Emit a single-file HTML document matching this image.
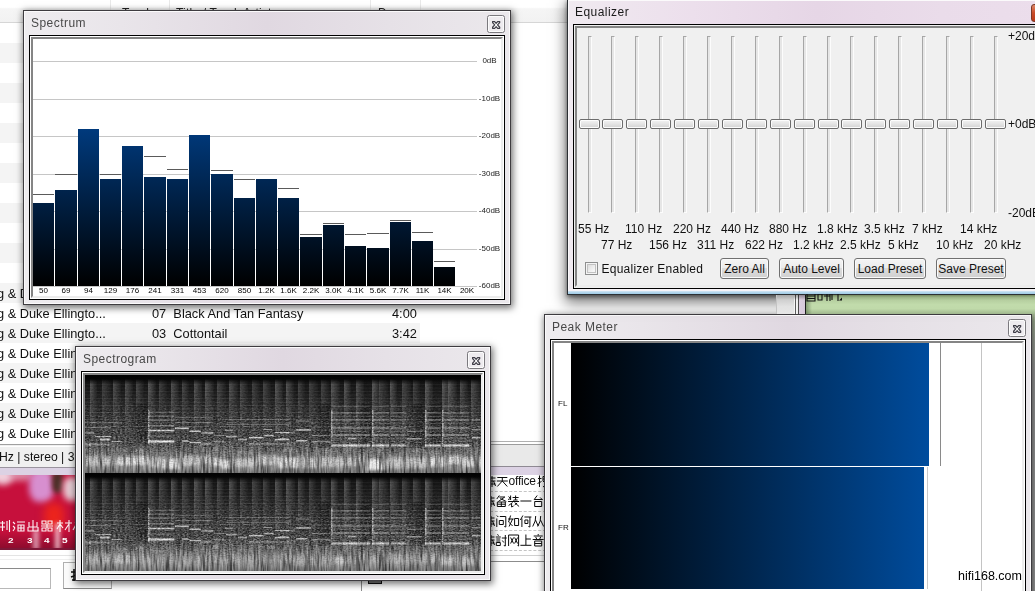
<!DOCTYPE html><html><head><meta charset="utf-8"><title>foobar2000</title><style>
*{box-sizing:border-box}
html,body{margin:0;padding:0}
body{width:1035px;height:591px;overflow:hidden;position:relative;background:#fff;
 font-family:"Liberation Sans",sans-serif;font-size:12px;color:#111}
.a{position:absolute}
.t{position:absolute;white-space:nowrap;line-height:1;filter:grayscale(1)}
.win{position:absolute;border:1px solid #3e3c40;box-shadow:1px 2px 7px 1px rgba(0,0,0,.55);
 background:#ece8ed}
.win:before{content:"";position:absolute;left:0;top:0;right:0;bottom:0;border:1px solid #fbfafb}
.ttl{position:absolute;white-space:nowrap;line-height:1;filter:grayscale(1);font-size:12px;letter-spacing:.45px;color:#4b4754}
.cls{position:absolute;width:18px;height:18px;border:1px solid #7b797e;border-radius:2.5px;
 background:#eeebef;box-shadow:inset 0 0 0 1px #fbfbfb}
.frm{position:absolute;border:1px solid #000;background:#fff}
.frm:before{content:"";position:absolute;left:1px;top:1px;right:1px;bottom:1px;border:2px solid #858585;border-right-color:#ececec;border-bottom-color:#ececec}
.btn{position:absolute;height:21px;border:1px solid #707070;border-radius:3px;
 background:linear-gradient(#f4f4f4 0,#ececec 45%,#dcdcdc 50%,#d0d0d0 100%);box-shadow:inset 0 0 0 1px #fafafa;
 font-size:12px;text-align:center;line-height:20px;color:#111;white-space:nowrap}
</style></head><body>
<div class="a" style="left:0;top:0;width:567px;height:23px;background:linear-gradient(#fff 0,#fff 33%,#f5f5f5 40%,#f2f2f2 100%);border-bottom:1px solid #d6d6d6"></div>
<div class="a" style="left:110px;top:0;width:1px;height:22px;background:#e9e9e9"></div>
<div class="a" style="left:169px;top:0;width:1px;height:22px;background:#e9e9e9"></div>
<div class="a" style="left:370px;top:0;width:1px;height:22px;background:#e9e9e9"></div>
<div class="a" style="left:420px;top:0;width:1px;height:22px;background:#e9e9e9"></div>
<div class="t" style="left:122px;top:7px;font-size:12px;letter-spacing:.2px;color:#222">Track</div>
<div class="t" style="left:176px;top:7px;font-size:12px;letter-spacing:.2px;color:#222">Title / Track Artist</div>
<div class="t" style="left:378px;top:7px;font-size:12px;letter-spacing:.2px;color:#222">Dura...</div>
<div class="a" style="left:0;top:43px;width:420px;height:20px;background:#f4f4f4"></div>
<div class="a" style="left:0;top:83px;width:420px;height:20px;background:#f4f4f4"></div>
<div class="a" style="left:0;top:123px;width:420px;height:20px;background:#f4f4f4"></div>
<div class="a" style="left:0;top:163px;width:420px;height:20px;background:#f4f4f4"></div>
<div class="a" style="left:0;top:203px;width:420px;height:20px;background:#f4f4f4"></div>
<div class="a" style="left:0;top:243px;width:420px;height:20px;background:#f4f4f4"></div>
<div class="a" style="left:0;top:283px;width:420px;height:20px;background:#f4f4f4"></div>
<div class="a" style="left:0;top:323px;width:420px;height:20px;background:#f4f4f4"></div>
<div class="a" style="left:0;top:363px;width:420px;height:20px;background:#f4f4f4"></div>
<div class="a" style="left:0;top:403px;width:420px;height:20px;background:#f4f4f4"></div>
<div class="t" style="left:-3px;top:288px;font-size:12.8px;color:#111">g &amp; Duke Ellingto...</div>
<div class="t" style="left:-3px;top:308px;font-size:12.8px;color:#111">g &amp; Duke Ellingto...</div>
<div class="t" style="left:-3px;top:328px;font-size:12.8px;color:#111">g &amp; Duke Ellingto...</div>
<div class="t" style="left:-3px;top:348px;font-size:12.8px;color:#111">g &amp; Duke Ellingto...</div>
<div class="t" style="left:-3px;top:368px;font-size:12.8px;color:#111">g &amp; Duke Ellingto...</div>
<div class="t" style="left:-3px;top:388px;font-size:12.8px;color:#111">g &amp; Duke Ellingto...</div>
<div class="t" style="left:-3px;top:408px;font-size:12.8px;color:#111">g &amp; Duke Ellingto...</div>
<div class="t" style="left:-3px;top:428px;font-size:12.8px;color:#111">g &amp; Duke Ellingto...</div>
<div class="t" style="left:152px;top:308px;font-size:12.8px">07&nbsp; Black And Tan Fantasy</div>
<div class="t" style="left:152px;top:328px;font-size:12.8px">03&nbsp; Cottontail</div>
<div class="t" style="left:392px;top:308px;font-size:12.8px">4:00</div>
<div class="t" style="left:392px;top:328px;font-size:12.8px">3:42</div>
<div class="a" style="left:0;top:444px;width:545px;height:1px;background:#a0a0a0"></div>
<div class="a" style="left:0;top:445px;width:545px;height:22px;background:#f0f0f0"></div>
<div class="a" style="left:0;top:446px;width:545px;height:1px;background:#fff"></div>
<div class="t" style="left:-1px;top:451px;font-size:12.2px">Hz | stereo | 3</div>
<div class="a" style="left:0;top:467px;width:545px;height:1px;background:#9a949e"></div>
<div class="a" style="left:0;top:468px;width:545px;height:7px;background:#dcd2e4"></div>
<div class="a" style="left:0;top:475px;width:80px;height:75px;overflow:hidden;background:#c6103c"><div class="a" style="left:-8px;top:-8px;width:22px;height:18px;background:#f0d0dc;border-radius:50%;filter:blur(3px)"></div><div class="a" style="left:8px;top:-6px;width:26px;height:12px;background:#e4a8c0;border-radius:50%;filter:blur(3px);opacity:.8"></div><div class="a" style="left:29px;top:-6px;width:25px;height:33px;background:#d78fcf;border-radius:40%;filter:blur(3px)"></div><div class="a" style="left:52px;top:-4px;width:11px;height:22px;background:#4a3028;border-radius:40%;filter:blur(2.5px)"></div><div class="a" style="left:63px;top:2px;width:18px;height:24px;background:#e6ccd4;border-radius:40%;filter:blur(3px)"></div><div class="a" style="left:44px;top:28px;width:20px;height:26px;background:#ec241c;border-radius:40%;filter:blur(4px)"></div><div class="a" style="left:0;top:56px;width:80px;height:19px;background:linear-gradient(rgba(120,10,40,0),rgba(120,10,40,.8))"></div><div class="a" style="left:33px;top:55px;width:6px;height:20px;background:#e8b0c4;filter:blur(2px);opacity:.8"></div><div class="a" style="left:55px;top:48px;width:5px;height:27px;background:#f4c8d4;filter:blur(2px);opacity:.85"></div><div class="a" style="left:0;top:73px;width:80px;height:2px;background:#7c1838"></div></div>
<svg class="a" style="left:0;top:519px" width="80" height="30" viewBox="0 0 80 30"><g stroke="#fff" stroke-width="1.1" fill="none" opacity=".95"><path d="M0 4h5M2.5 2v10M0 8h5M7 2v9M9.5 1v12"/><path d="M13 3l2 2M13 7l2 2M13 12l2-3M17 3h8M18 6h6v6h-6zM21 6v6M18 9h6"/><path d="M29 3v5h8v-5M33 1v11M28 8v4h10v-4"/><path d="M42 2h4v3h-4zM48 2h4v3h-4zM41 7h12M47 5v4M42 9h4v3h-4zM48 9h4v3h-4z"/><path d="M57 4h6M60 1v12M60 5l-3 5M60 5l3 4M65 4h7M69 1v12M69 5l-4 6"/><path d="M75 3l3 3M78 2l-5 9"/></g></svg>
<div class="t" style="left:8px;top:537px;font-size:8px;font-weight:bold;color:#fff;transform:scaleX(1.25);transform-origin:0 0">2</div>
<div class="t" style="left:26.5px;top:537px;font-size:8px;font-weight:bold;color:#fff;transform:scaleX(1.25);transform-origin:0 0">3</div>
<div class="t" style="left:44px;top:537px;font-size:8px;font-weight:bold;color:#fff;transform:scaleX(1.25);transform-origin:0 0">4</div>
<div class="t" style="left:62px;top:537px;font-size:8px;font-weight:bold;color:#fff;transform:scaleX(1.25);transform-origin:0 0">5</div>
<div class="a" style="left:0;top:555px;width:76px;height:1px;background:#e4e4e4"></div>
<div class="a" style="left:0;top:559px;width:76px;height:1px;background:#efefef"></div>
<div class="a" style="left:-2px;top:568px;width:53px;height:21px;border:1px solid #b8b8b8;border-top-color:#8a8a8a;background:#fff"></div>
<div class="a" style="left:63px;top:562px;width:49px;height:27px;border:1px solid #b0b0b0;border-bottom-color:#888;background:#fbfbfb"></div>
<svg class="a" style="left:70px;top:568px" width="8" height="14"><path d="M1 4h6M4 1v12M1 9l6-2M2 12h4" stroke="#111" stroke-width="1.6" fill="none"/></svg>
<div class="a" style="left:361px;top:575px;width:1px;height:16px;background:#8c8c8c"></div>
<div class="a" style="left:368px;top:575px;width:14px;height:9px;border:1px solid #111;background:#777"></div>
<div class="a" style="left:490px;top:441px;width:56px;height:1px;background:#b0b0b0"></div>
<div class="a" style="left:490px;top:445px;width:56px;height:22px;background:#e9e9e9"></div>
<div class="a" style="left:490px;top:444px;width:56px;height:1px;background:#9c9c9c"></div>
<div class="a" style="left:490px;top:466px;width:56px;height:1px;background:#8f8a93"></div>
<div class="a" style="left:490px;top:467px;width:56px;height:6px;background:#dcd2e4"></div>
<div class="a" style="left:490px;top:491px;width:56px;height:0;border-top:1px dashed #c4c4c4"></div>
<div class="a" style="left:490px;top:511px;width:56px;height:0;border-top:1px dashed #c4c4c4"></div>
<div class="a" style="left:490px;top:530px;width:56px;height:0;border-top:1px dashed #c4c4c4"></div>
<div class="a" style="left:490px;top:550px;width:56px;height:0;border-top:1px dashed #c4c4c4"></div>
<div class="a" style="left:490px;top:555px;width:56px;height:1px;background:#d0d0d0"></div>
<div class="a" style="left:490px;top:561px;width:56px;height:1px;background:#8c8c8c"></div>
<svg class="a" style="left:483.5px;top:475px" width="26" height="13" viewBox="0 0 26 13"><g stroke="#0c0c0c" stroke-width="1" fill="none"><path transform="translate(0.0,0)" d="M8 1V12M6 3H11.5M6 6H11.5M6 9H11.5M9.5 6L11.5 11"/><path transform="translate(12.3,0)" d="M1 2.5H11M.5 6H11.5M6 2.5V6M6 6L1 11.5M6 6L11 11.5"/></g></svg>
<div class="t" style="left:508.5px;top:475px;font-size:12px;color:#111;letter-spacing:-.2px">office</div>
<svg class="a" style="left:536.5px;top:475px" width="14" height="13" viewBox="0 0 14 13"><g stroke="#0c0c0c" stroke-width="1" fill="none"><path transform="translate(0.0,0)" d="M1 3.5H4.5M2.5 .5V12M.5 8.5L4.5 6.5M6 1.5V6M6 1.5H8M6 4H8M6 6.5H11M7 8L11 12M11 8L6 12"/></g></svg>
<svg class="a" style="left:483px;top:495px" width="63" height="13" viewBox="0 0 63 13"><g stroke="#0c0c0c" stroke-width="1" fill="none"><path transform="translate(0.0,0)" d="M8 1V12M6 3H11.5M6 6H11.5M6 9H11.5M9.5 6L11.5 11"/><path transform="translate(12.3,0)" d="M4 .5L1.5 4M4 2H9.5M9.5 2L3 6.5M5 3.5L11 6.5M2 7H10V11.5H2ZM6 7V11.5M2 9.2H10"/><path transform="translate(24.6,0)" d="M1 1.5L2.5 3M3 .5V5M.5 4.5L3 3.5M5 2.5H11M8 .5V5M6 5H10M.5 6.5H11.5M6 5.5V7M5 7.5L1 10.5M4 8.5V12L6 11M7 7.5L11.5 11.5M9.5 8L7 10"/><path transform="translate(36.9,0)" d="M.5 6H11.5"/><path transform="translate(49.2,0)" d="M5 .5L2 4.5H10M8 2.5L10.5 5M2.5 6.5H9.5V11.5H2.5Z"/></g></svg>
<svg class="a" style="left:483px;top:514.5px" width="75" height="13" viewBox="0 0 75 13"><g stroke="#0c0c0c" stroke-width="1" fill="none"><path transform="translate(0.0,0)" d="M8 1V12M6 3H11.5M6 6H11.5M6 9H11.5M9.5 6L11.5 11"/><path transform="translate(12.3,0)" d="M1.5 .5L3 2M1.5 3.5V12M4.5 1.5H10.5V12L9 11.5M4 5.5H8V9.5H4Z"/><path transform="translate(24.6,0)" d="M3 .5L1 7L5 11M.5 4H6M5 4L1.5 11.5M7 3.5H11V10.5H7Z"/><path transform="translate(36.9,0)" d="M3 .5L.5 5M2 3.5V12M4.5 2H11.5M10 2V12L8.5 11.5M5 5H8V8.5H5Z"/><path transform="translate(49.2,0)" d="M3.5 1L3 6L.5 11.5M3.3 5L6 11M8.5 1L8 6L5.5 11.5M8.3 5L11.5 11.5"/><path transform="translate(61.5,0)" d="M8 1V12M6 3H11.5M6 6H11.5M6 9H11.5M9.5 6L11.5 11"/></g></svg>
<svg class="a" style="left:483px;top:534px" width="75" height="13" viewBox="0 0 75 13"><g stroke="#0c0c0c" stroke-width="1" fill="none"><path transform="translate(0.0,0)" d="M8 1V12M6 3H11.5M6 6H11.5M6 9H11.5M9.5 6L11.5 11"/><path transform="translate(12.3,0)" d="M2 .5L3.5 1.5M.5 3H5.5M1 5H5M1 7H5M1 8.5H5V11.5H1ZM6.5 4H11.5M10 1V12L8.5 11.5M7 6.5L8.5 8.5"/><path transform="translate(24.6,0)" d="M1 1H11V12L10 11.5M1 1V12M3 3.5L6 9.5M6 3.5L3 9.5M7 3.5L10 9.5M10 3.5L7 9.5"/><path transform="translate(36.9,0)" d="M6 .5V11M6 5H11M.5 11.3H11.5"/><path transform="translate(49.2,0)" d="M6 0V1.5M1.5 2H10.5M3.5 3L4.5 5M8.5 3L7.5 5M.5 5.5H11.5M2.5 7H9.5V12H2.5ZM2.5 9.5H9.5"/><path transform="translate(61.5,0)" d="M8 1V12M6 3H11.5M6 6H11.5M6 9H11.5M9.5 6L11.5 11"/></g></svg>
<div class="win" style="left:23px;top:10px;width:488px;height:295px;background:linear-gradient(90deg,#eeecef 0,#e9e5ea 20%,#e0d8e1 50%,#e6e1e7 75%,#ebe8ec 100%)"></div>
<div class="ttl" style="left:31px;top:17px">Spectrum</div>
<div class="cls" style="left:487px;top:15px"></div><svg class="a" style="left:492.4px;top:20.6px" width="9" height="9" viewBox="-0.6 -0.6 9.6 9.6"><path d="M0 0H2.2L3.8 1.8L5.4 0H7.6V1.1L5.3 3.6L7.6 6.1V7.2H5.4L3.8 5.4L2.2 7.2H0V6.1L2.3 3.6L0 1.1Z" fill="#fdfdfd" stroke="#403e49" stroke-width="1.3" stroke-linejoin="round"/></svg>
<div class="frm" style="left:29px;top:35px;width:476px;height:265px"></div>
<div class="a" style="left:33px;top:61px;width:444px;height:1px;background:#c6c6c6"></div>
<div class="a" style="left:33px;top:99px;width:444px;height:1px;background:#c6c6c6"></div>
<div class="a" style="left:33px;top:136px;width:444px;height:1px;background:#c6c6c6"></div>
<div class="a" style="left:33px;top:174px;width:444px;height:1px;background:#c6c6c6"></div>
<div class="a" style="left:33px;top:211px;width:444px;height:1px;background:#c6c6c6"></div>
<div class="a" style="left:33px;top:249px;width:444px;height:1px;background:#c6c6c6"></div>
<div class="a" style="left:33px;top:286px;width:444px;height:1px;background:#c6c6c6"></div>
<div class="t" style="left:470px;top:57px;width:39px;text-align:center;font-size:8px;color:#222">0dB</div>
<div class="t" style="left:470px;top:95px;width:39px;text-align:center;font-size:8px;color:#222">-10dB</div>
<div class="t" style="left:470px;top:132px;width:39px;text-align:center;font-size:8px;color:#222">-20dB</div>
<div class="t" style="left:470px;top:170px;width:39px;text-align:center;font-size:8px;color:#222">-30dB</div>
<div class="t" style="left:470px;top:207px;width:39px;text-align:center;font-size:8px;color:#222">-40dB</div>
<div class="t" style="left:470px;top:245px;width:39px;text-align:center;font-size:8px;color:#222">-50dB</div>
<div class="t" style="left:470px;top:282px;width:39px;text-align:center;font-size:8px;color:#222">-60dB</div>
<div class="a" style="left:33px;top:203px;width:21px;height:83px;background:linear-gradient(to top,#000 0,rgb(0,91,196) 100%) 0 100%/100% 247px no-repeat"></div>
<div class="a" style="left:33px;top:194px;width:21px;height:1px;background:#5a5a5a"></div>
<div class="t" style="left:28.5px;top:287px;width:30px;text-align:center;font-size:8px;color:#000">50</div>
<div class="a" style="left:55px;top:190px;width:22px;height:96px;background:linear-gradient(to top,#000 0,rgb(0,91,196) 100%) 0 100%/100% 247px no-repeat"></div>
<div class="a" style="left:55px;top:174px;width:22px;height:1px;background:#5a5a5a"></div>
<div class="t" style="left:51.0px;top:287px;width:30px;text-align:center;font-size:8px;color:#000">69</div>
<div class="a" style="left:78px;top:129px;width:21px;height:157px;background:linear-gradient(to top,#000 0,rgb(0,91,196) 100%) 0 100%/100% 247px no-repeat"></div>
<div class="t" style="left:73.5px;top:287px;width:30px;text-align:center;font-size:8px;color:#000">94</div>
<div class="a" style="left:100px;top:179px;width:21px;height:107px;background:linear-gradient(to top,#000 0,rgb(0,91,196) 100%) 0 100%/100% 247px no-repeat"></div>
<div class="a" style="left:100px;top:174px;width:21px;height:1px;background:#5a5a5a"></div>
<div class="t" style="left:95.5px;top:287px;width:30px;text-align:center;font-size:8px;color:#000">129</div>
<div class="a" style="left:122px;top:146px;width:21px;height:140px;background:linear-gradient(to top,#000 0,rgb(0,91,196) 100%) 0 100%/100% 247px no-repeat"></div>
<div class="t" style="left:117.5px;top:287px;width:30px;text-align:center;font-size:8px;color:#000">176</div>
<div class="a" style="left:144px;top:177px;width:22px;height:109px;background:linear-gradient(to top,#000 0,rgb(0,91,196) 100%) 0 100%/100% 247px no-repeat"></div>
<div class="a" style="left:144px;top:156px;width:22px;height:1px;background:#5a5a5a"></div>
<div class="t" style="left:140.0px;top:287px;width:30px;text-align:center;font-size:8px;color:#000">241</div>
<div class="a" style="left:167px;top:179px;width:21px;height:107px;background:linear-gradient(to top,#000 0,rgb(0,91,196) 100%) 0 100%/100% 247px no-repeat"></div>
<div class="a" style="left:167px;top:169px;width:21px;height:1px;background:#5a5a5a"></div>
<div class="t" style="left:162.5px;top:287px;width:30px;text-align:center;font-size:8px;color:#000">331</div>
<div class="a" style="left:189px;top:135px;width:21px;height:151px;background:linear-gradient(to top,#000 0,rgb(0,91,196) 100%) 0 100%/100% 247px no-repeat"></div>
<div class="t" style="left:184.5px;top:287px;width:30px;text-align:center;font-size:8px;color:#000">453</div>
<div class="a" style="left:211px;top:174px;width:22px;height:112px;background:linear-gradient(to top,#000 0,rgb(0,91,196) 100%) 0 100%/100% 247px no-repeat"></div>
<div class="a" style="left:211px;top:170px;width:22px;height:1px;background:#5a5a5a"></div>
<div class="t" style="left:207.0px;top:287px;width:30px;text-align:center;font-size:8px;color:#000">620</div>
<div class="a" style="left:234px;top:198px;width:21px;height:88px;background:linear-gradient(to top,#000 0,rgb(0,91,196) 100%) 0 100%/100% 247px no-repeat"></div>
<div class="a" style="left:234px;top:179px;width:21px;height:1px;background:#5a5a5a"></div>
<div class="t" style="left:229.5px;top:287px;width:30px;text-align:center;font-size:8px;color:#000">850</div>
<div class="a" style="left:256px;top:179px;width:21px;height:107px;background:linear-gradient(to top,#000 0,rgb(0,91,196) 100%) 0 100%/100% 247px no-repeat"></div>
<div class="t" style="left:251.5px;top:287px;width:30px;text-align:center;font-size:8px;color:#000">1.2K</div>
<div class="a" style="left:278px;top:198px;width:21px;height:88px;background:linear-gradient(to top,#000 0,rgb(0,91,196) 100%) 0 100%/100% 247px no-repeat"></div>
<div class="a" style="left:278px;top:188px;width:21px;height:1px;background:#5a5a5a"></div>
<div class="t" style="left:273.5px;top:287px;width:30px;text-align:center;font-size:8px;color:#000">1.6K</div>
<div class="a" style="left:300px;top:237px;width:22px;height:49px;background:linear-gradient(to top,#000 0,rgb(0,91,196) 100%) 0 100%/100% 247px no-repeat"></div>
<div class="a" style="left:300px;top:234px;width:22px;height:1px;background:#5a5a5a"></div>
<div class="t" style="left:296.0px;top:287px;width:30px;text-align:center;font-size:8px;color:#000">2.2K</div>
<div class="a" style="left:323px;top:225px;width:21px;height:61px;background:linear-gradient(to top,#000 0,rgb(0,91,196) 100%) 0 100%/100% 247px no-repeat"></div>
<div class="a" style="left:323px;top:223px;width:21px;height:1px;background:#5a5a5a"></div>
<div class="t" style="left:318.5px;top:287px;width:30px;text-align:center;font-size:8px;color:#000">3.0K</div>
<div class="a" style="left:345px;top:246px;width:21px;height:40px;background:linear-gradient(to top,#000 0,rgb(0,91,196) 100%) 0 100%/100% 247px no-repeat"></div>
<div class="a" style="left:345px;top:234px;width:21px;height:1px;background:#5a5a5a"></div>
<div class="t" style="left:340.5px;top:287px;width:30px;text-align:center;font-size:8px;color:#000">4.1K</div>
<div class="a" style="left:367px;top:248px;width:22px;height:38px;background:linear-gradient(to top,#000 0,rgb(0,91,196) 100%) 0 100%/100% 247px no-repeat"></div>
<div class="a" style="left:367px;top:233px;width:22px;height:1px;background:#5a5a5a"></div>
<div class="t" style="left:363.0px;top:287px;width:30px;text-align:center;font-size:8px;color:#000">5.6K</div>
<div class="a" style="left:390px;top:222px;width:21px;height:64px;background:linear-gradient(to top,#000 0,rgb(0,91,196) 100%) 0 100%/100% 247px no-repeat"></div>
<div class="a" style="left:390px;top:220px;width:21px;height:1px;background:#5a5a5a"></div>
<div class="t" style="left:385.5px;top:287px;width:30px;text-align:center;font-size:8px;color:#000">7.7K</div>
<div class="a" style="left:412px;top:241px;width:21px;height:45px;background:linear-gradient(to top,#000 0,rgb(0,91,196) 100%) 0 100%/100% 247px no-repeat"></div>
<div class="a" style="left:412px;top:232px;width:21px;height:1px;background:#5a5a5a"></div>
<div class="t" style="left:407.5px;top:287px;width:30px;text-align:center;font-size:8px;color:#000">11K</div>
<div class="a" style="left:434px;top:267px;width:21px;height:19px;background:linear-gradient(to top,#000 0,rgb(0,91,196) 100%) 0 100%/100% 247px no-repeat"></div>
<div class="a" style="left:434px;top:261px;width:21px;height:1px;background:#5a5a5a"></div>
<div class="t" style="left:429.5px;top:287px;width:30px;text-align:center;font-size:8px;color:#000">14K</div>
<div class="t" style="left:452.0px;top:287px;width:30px;text-align:center;font-size:8px;color:#000">20K</div>
<div class="win" style="left:75px;top:346px;width:416px;height:235px;background:linear-gradient(90deg,#eeecef 0,#e9e5ea 20%,#e0d8e1 50%,#e6e1e7 75%,#ebe8ec 100%)"></div>
<div class="ttl" style="left:83px;top:353px">Spectrogram</div>
<div class="cls" style="left:467px;top:351px"></div><svg class="a" style="left:472.4px;top:356.6px" width="9" height="9" viewBox="-0.6 -0.6 9.6 9.6"><path d="M0 0H2.2L3.8 1.8L5.4 0H7.6V1.1L5.3 3.6L7.6 6.1V7.2H5.4L3.8 5.4L2.2 7.2H0V6.1L2.3 3.6L0 1.1Z" fill="#fdfdfd" stroke="#403e49" stroke-width="1.3" stroke-linejoin="round"/></svg>
<div class="frm" style="left:81px;top:371px;width:404px;height:204px;background:#fff"></div>
<svg class="a" style="left:85px;top:375px" width="396" height="196" viewBox="0 0 396 196"><defs><linearGradient id="sg" x1="0" y1="0" x2="0" y2="1"><stop offset="0" stop-color="#020202"/><stop offset=".04" stop-color="#060606"/><stop offset=".08" stop-color="#161616"/><stop offset=".25" stop-color="#222"/><stop offset=".42" stop-color="#2e2e2e"/><stop offset=".55" stop-color="#3c3c3c"/><stop offset=".64" stop-color="#484848"/><stop offset=".71" stop-color="#5a5a5a"/><stop offset=".77" stop-color="#707070"/><stop offset=".83" stop-color="#8a8a8a"/><stop offset=".89" stop-color="#989898"/><stop offset=".95" stop-color="#868686"/><stop offset="1" stop-color="#6a6a6a"/></linearGradient><linearGradient id="sh" x1="0" y1="0" x2="1" y2="0"><stop offset="0" stop-color="#fff" stop-opacity="1"/><stop offset=".35" stop-color="#fff" stop-opacity=".7"/><stop offset="1" stop-color="#fff" stop-opacity=".1"/></linearGradient><linearGradient id="smg" x1="0" y1="0" x2="0" y2="1"><stop offset="0" stop-color="#000"/><stop offset=".04" stop-color="#000"/><stop offset=".1" stop-color="#555"/><stop offset=".3" stop-color="#3c3c3c"/><stop offset=".55" stop-color="#2a2a2a"/><stop offset=".75" stop-color="#000"/></linearGradient><mask id="sm" maskUnits="userSpaceOnUse" x="0" y="0" width="396" height="98.0"><rect width="396" height="98.0" fill="url(#smg)"/></mask><linearGradient id="st" x1="0" y1="0" x2="0" y2="1"><stop offset="0" stop-color="#fff" stop-opacity="0"/><stop offset=".08" stop-color="#fff" stop-opacity=".30"/><stop offset=".55" stop-color="#fff" stop-opacity=".15"/><stop offset="1" stop-color="#fff" stop-opacity="0"/></linearGradient><linearGradient id="m1g" x1="0" y1="0" x2="0" y2="1"><stop offset="0" stop-color="#000"/><stop offset=".06" stop-color="#222"/><stop offset=".3" stop-color="#777"/><stop offset=".5" stop-color="#ccc"/><stop offset=".72" stop-color="#fff"/><stop offset=".82" stop-color="#666"/><stop offset="1" stop-color="#000"/></linearGradient><linearGradient id="m2g" x1="0" y1="0" x2="0" y2="1"><stop offset="0" stop-color="#000"/><stop offset=".2" stop-color="#000"/><stop offset=".45" stop-color="#999"/><stop offset=".7" stop-color="#fff"/><stop offset=".8" stop-color="#555"/><stop offset=".9" stop-color="#000"/></linearGradient><linearGradient id="m3g" x1="0" y1="0" x2="0" y2="1"><stop offset="0" stop-color="#000"/><stop offset=".64" stop-color="#000"/><stop offset=".76" stop-color="#bbb"/><stop offset=".84" stop-color="#fff"/><stop offset="1" stop-color="#fff"/></linearGradient><mask id="m1" maskUnits="userSpaceOnUse" x="0" y="0" width="396" height="98.0"><rect width="396" height="98.0" fill="url(#m1g)"/></mask><mask id="m2" maskUnits="userSpaceOnUse" x="0" y="0" width="396" height="98.0"><rect width="396" height="98.0" fill="url(#m2g)"/></mask><mask id="m3" maskUnits="userSpaceOnUse" x="0" y="0" width="396" height="98.0"><rect width="396" height="98.0" fill="url(#m3g)"/></mask><filter id="nz" x="0" y="0" width="100%" height="100%"><feTurbulence type="fractalNoise" baseFrequency=".45 .8" numOctaves="2" seed="3"/><feColorMatrix type="matrix" values="0 0 0 0 0  0 0 0 0 0  0 0 0 0 0  2.2 2.2 0 0 -1.9"/><feGaussianBlur stdDeviation=".4"/></filter><filter id="nw" x="0" y="0" width="100%" height="100%"><feTurbulence type="fractalNoise" baseFrequency=".45 .8" numOctaves="2" seed="9"/><feColorMatrix type="matrix" values="0 0 0 0 1  0 0 0 0 1  0 0 0 0 1  2.2 2.2 0 0 -2.0"/><feGaussianBlur stdDeviation=".4"/></filter><filter id="vz" x="0" y="0" width="100%" height="100%"><feTurbulence type="fractalNoise" baseFrequency=".42 .05" numOctaves="2" seed="5"/><feColorMatrix type="matrix" values="0 0 0 0 1  0 0 0 0 1  0 0 0 0 1  2.6 2.6 0 0 -2.3"/><feGaussianBlur stdDeviation=".45"/></filter><filter id="vd" x="0" y="0" width="100%" height="100%"><feTurbulence type="fractalNoise" baseFrequency=".42 .05" numOctaves="2" seed="11"/><feColorMatrix type="matrix" values="0 0 0 0 0  0 0 0 0 0  0 0 0 0 0  2.6 2.6 0 0 -2.3"/><feGaussianBlur stdDeviation=".45"/></filter><filter id="bl" x="-5%" y="-20%" width="110%" height="140%"><feGaussianBlur stdDeviation="1.8 1.3"/></filter><filter id="bs" x="-2%" y="-5%" width="104%" height="110%"><feGaussianBlur stdDeviation="1.2 .6"/></filter><filter id="b2" x="0" y="0" width="100%" height="100%"><feGaussianBlur stdDeviation=".4"/></filter></defs><g transform="translate(0,0.0)"><rect width="396" height="98.0" fill="url(#sg)"/><g mask="url(#sm)"><g filter="url(#b2)"><rect x="5" y="0" width="7" height="74" fill="url(#sh)" opacity="0.82"/><rect x="17" y="0" width="9" height="74" fill="url(#sh)" opacity="0.57"/><rect x="28" y="0" width="8" height="74" fill="url(#sh)" opacity="0.73"/><rect x="40" y="0" width="8" height="74" fill="url(#sh)" opacity="0.77"/><rect x="51" y="0" width="8" height="74" fill="url(#sh)" opacity="0.64"/><rect x="63" y="0" width="8" height="74" fill="url(#sh)" opacity="0.91"/><rect x="74" y="0" width="8" height="74" fill="url(#sh)" opacity="0.57"/><rect x="86" y="0" width="8" height="74" fill="url(#sh)" opacity="0.79"/><rect x="97" y="0" width="7" height="74" fill="url(#sh)" opacity="0.64"/><rect x="109" y="0" width="8" height="74" fill="url(#sh)" opacity="0.81"/><rect x="120" y="0" width="9" height="74" fill="url(#sh)" opacity="0.86"/><rect x="132" y="0" width="9" height="74" fill="url(#sh)" opacity="0.64"/><rect x="144" y="0" width="9" height="74" fill="url(#sh)" opacity="0.79"/><rect x="155" y="0" width="8" height="74" fill="url(#sh)" opacity="0.67"/><rect x="167" y="0" width="8" height="74" fill="url(#sh)" opacity="0.57"/><rect x="178" y="0" width="8" height="74" fill="url(#sh)" opacity="0.63"/><rect x="190" y="0" width="8" height="74" fill="url(#sh)" opacity="0.85"/><rect x="201" y="0" width="8" height="74" fill="url(#sh)" opacity="0.83"/><rect x="213" y="0" width="7" height="74" fill="url(#sh)" opacity="0.58"/><rect x="224" y="0" width="9" height="74" fill="url(#sh)" opacity="0.58"/><rect x="236" y="0" width="8" height="74" fill="url(#sh)" opacity="0.58"/><rect x="246" y="0" width="9" height="74" fill="url(#sh)" opacity="0.88"/><rect x="259" y="0" width="7" height="74" fill="url(#sh)" opacity="0.86"/><rect x="271" y="0" width="8" height="74" fill="url(#sh)" opacity="0.78"/><rect x="287" y="0" width="8" height="74" fill="url(#sh)" opacity="0.92"/><rect x="294" y="0" width="9" height="74" fill="url(#sh)" opacity="0.57"/><rect x="305" y="0" width="7" height="74" fill="url(#sh)" opacity="0.89"/><rect x="317" y="0" width="9" height="74" fill="url(#sh)" opacity="0.66"/><rect x="328" y="0" width="7" height="74" fill="url(#sh)" opacity="0.57"/><rect x="340" y="0" width="8" height="74" fill="url(#sh)" opacity="0.93"/><rect x="357" y="0" width="9" height="74" fill="url(#sh)" opacity="0.86"/><rect x="363" y="0" width="9" height="74" fill="url(#sh)" opacity="0.88"/><rect x="375" y="0" width="8" height="74" fill="url(#sh)" opacity="0.72"/><rect x="386" y="0" width="9" height="74" fill="url(#sh)" opacity="0.78"/></g></g><rect x="51" y="29" width="11" height="43" fill="#000" opacity=".3" filter="url(#bs)"/><rect x="234" y="29" width="11" height="43" fill="#000" opacity=".3" filter="url(#bs)"/><rect x="275" y="29" width="11" height="43" fill="#000" opacity=".3" filter="url(#bs)"/><rect x="328" y="29" width="11" height="43" fill="#000" opacity=".3" filter="url(#bs)"/><rect x="345" y="29" width="11" height="43" fill="#000" opacity=".3" filter="url(#bs)"/><g filter="url(#b2)"><rect x="63" y="35" width="1.5" height="34" fill="#fff" opacity=".45"/><rect x="246" y="35" width="1.5" height="34" fill="#fff" opacity=".45"/><rect x="287" y="35" width="1.5" height="34" fill="#fff" opacity=".45"/><rect x="340" y="35" width="1.5" height="34" fill="#fff" opacity=".45"/><rect x="357" y="35" width="1.5" height="34" fill="#fff" opacity=".45"/><rect x="0" y="9.0" width="396" height="1" fill="#fff" opacity="0.040"/><rect x="0" y="12.5" width="396" height="1" fill="#fff" opacity="0.049"/><rect x="0" y="16.0" width="396" height="1" fill="#fff" opacity="0.058"/><rect x="0" y="19.5" width="396" height="1" fill="#fff" opacity="0.067"/><rect x="0" y="23.0" width="396" height="1" fill="#fff" opacity="0.076"/><rect x="0" y="26.5" width="396" height="1" fill="#fff" opacity="0.085"/><rect x="0" y="30.0" width="396" height="1" fill="#fff" opacity="0.094"/><rect x="0" y="33.5" width="396" height="1" fill="#fff" opacity="0.103"/><rect x="0" y="37.0" width="396" height="1" fill="#fff" opacity="0.112"/><rect x="0" y="40.5" width="396" height="1" fill="#fff" opacity="0.121"/><rect x="0" y="44.0" width="396" height="1" fill="#fff" opacity="0.130"/><rect x="0" y="47.5" width="396" height="1" fill="#fff" opacity="0.139"/><rect x="0" y="51.0" width="396" height="1" fill="#fff" opacity="0.148"/><rect x="0" y="54.5" width="396" height="1" fill="#fff" opacity="0.157"/></g><g filter="url(#bl)"><rect x="-4" y="80.6" width="18" height="10.1" fill="#fff" opacity="0.36"/><rect x="-2" y="73.5" width="15" height="3" fill="#fff" opacity="0.18"/><rect x="18" y="81.9" width="10" height="8.7" fill="#fff" opacity="0.39"/><rect x="20" y="74.2" width="7" height="3" fill="#fff" opacity="0.21"/><rect x="32" y="81.9" width="14" height="8.5" fill="#fff" opacity="0.68"/><rect x="34" y="73.1" width="11" height="3" fill="#fff" opacity="0.23"/><rect x="47" y="81.1" width="16" height="8.7" fill="#fff" opacity="0.76"/><rect x="49" y="74.6" width="13" height="3" fill="#fff" opacity="0.22"/><rect x="66" y="82.4" width="11" height="9.7" fill="#fff" opacity="0.68"/><rect x="78" y="83.4" width="16" height="10.4" fill="#fff" opacity="0.79"/><rect x="98" y="80.8" width="15" height="9.7" fill="#fff" opacity="0.52"/><rect x="100" y="72.8" width="12" height="3" fill="#fff" opacity="0.14"/><rect x="115" y="80.6" width="10" height="7.8" fill="#fff" opacity="0.49"/><rect x="117" y="72.9" width="7" height="3" fill="#fff" opacity="0.17"/><rect x="126" y="82.8" width="10" height="8.3" fill="#fff" opacity="0.78"/><rect x="128" y="73.9" width="7" height="3" fill="#fff" opacity="0.17"/><rect x="137" y="84.3" width="10" height="9.2" fill="#fff" opacity="0.77"/><rect x="139" y="72.9" width="7" height="3" fill="#fff" opacity="0.12"/><rect x="150" y="83.6" width="20" height="8.3" fill="#fff" opacity="0.45"/><rect x="152" y="76.2" width="17" height="3" fill="#fff" opacity="0.21"/><rect x="172" y="80.5" width="20" height="9.4" fill="#fff" opacity="0.60"/><rect x="193" y="82.4" width="20" height="10.5" fill="#fff" opacity="0.76"/><rect x="195" y="73.4" width="17" height="3" fill="#fff" opacity="0.21"/><rect x="218" y="82.8" width="14" height="10.2" fill="#fff" opacity="0.65"/><rect x="234" y="81.9" width="21" height="10.2" fill="#fff" opacity="0.43"/><rect x="236" y="74.5" width="18" height="3" fill="#fff" opacity="0.25"/><rect x="256" y="81.4" width="21" height="9.9" fill="#fff" opacity="0.45"/><rect x="281" y="84.2" width="21" height="10.6" fill="#fff" opacity="0.82"/><rect x="283" y="73.4" width="18" height="3" fill="#fff" opacity="0.15"/><rect x="304" y="82.8" width="14" height="10.5" fill="#fff" opacity="0.41"/><rect x="322" y="82.9" width="19" height="10.3" fill="#fff" opacity="0.49"/><rect x="324" y="74.0" width="16" height="3" fill="#fff" opacity="0.24"/><rect x="343" y="82.1" width="16" height="9.7" fill="#fff" opacity="0.79"/><rect x="345" y="76.2" width="13" height="3" fill="#fff" opacity="0.24"/><rect x="363" y="80.7" width="15" height="8.3" fill="#fff" opacity="0.71"/><rect x="379" y="82.2" width="11" height="9.8" fill="#fff" opacity="0.62"/><rect x="395" y="81.7" width="16" height="9.5" fill="#fff" opacity="0.66"/><rect x="397" y="72.6" width="13" height="3" fill="#fff" opacity="0.29"/></g><g mask="url(#m1)"><rect width="396" height="98.0" filter="url(#nz)" opacity=".5"/></g><g mask="url(#m2)"><rect width="396" height="98.0" filter="url(#nw)" opacity=".3"/></g><g filter="url(#b2)"><rect x="0" y="57.5" width="9.2" height="1" fill="#fff" opacity="0.63"/><rect x="10" y="61.0" width="16.2" height="1" fill="#fff" opacity="0.63"/><rect x="15" y="63.5" width="10.2" height="2" fill="#fff" opacity="0.72"/><rect x="0" y="68.5" width="26.2" height="2" fill="#fff" opacity="0.41"/><rect x="27" y="66.0" width="10.2" height="1" fill="#fff" opacity="0.50"/><rect x="0" y="52.0" width="26.2" height="1" fill="#fff" opacity="0.27"/><rect x="0" y="47.0" width="37.2" height="1" fill="#fff" opacity="0.23"/><rect x="63" y="54.8" width="26.2" height="1.5" fill="#fff" opacity="0.77"/><rect x="63" y="65.4" width="26.2" height="2.2" fill="#fff" opacity="0.90"/><rect x="63" y="50.0" width="26.2" height="1" fill="#fff" opacity="0.36"/><rect x="63" y="44.7" width="26.2" height="1" fill="#fff" opacity="0.36"/><rect x="63" y="40.6" width="26.2" height="1" fill="#fff" opacity="0.32"/><rect x="63" y="36.6" width="26.2" height="1" fill="#fff" opacity="0.27"/><rect x="63" y="60.5" width="26.2" height="1" fill="#fff" opacity="0.27"/><rect x="90" y="52.5" width="13.7" height="1.5" fill="#fff" opacity="0.72"/><rect x="104.5" y="55.5" width="11.4" height="1.5" fill="#fff" opacity="0.68"/><rect x="116.7" y="57.2" width="11.5" height="1.5" fill="#fff" opacity="0.63"/><rect x="97" y="65.3" width="6.7" height="1.5" fill="#fff" opacity="0.63"/><rect x="104.5" y="66.8" width="11.4" height="1.5" fill="#fff" opacity="0.68"/><rect x="116.7" y="68.2" width="9.5" height="1.5" fill="#fff" opacity="0.54"/><rect x="90" y="47.0" width="38.2" height="1" fill="#fff" opacity="0.27"/><rect x="90" y="42.0" width="38.2" height="1" fill="#fff" opacity="0.23"/><rect x="129" y="60.0" width="10.2" height="1" fill="#fff" opacity="0.36"/><rect x="129" y="66.0" width="10.2" height="1" fill="#fff" opacity="0.36"/><rect x="140" y="54.8" width="8.2" height="1" fill="#fff" opacity="0.54"/><rect x="141" y="60.8" width="11.2" height="1.5" fill="#fff" opacity="0.59"/><rect x="153" y="63.8" width="9.2" height="1.5" fill="#fff" opacity="0.54"/><rect x="164" y="61.8" width="13.7" height="1.5" fill="#fff" opacity="0.77"/><rect x="178.5" y="59.8" width="10.4" height="1.5" fill="#fff" opacity="0.63"/><rect x="189.7" y="63.8" width="14.5" height="1.5" fill="#fff" opacity="0.77"/><rect x="189.7" y="57.0" width="14.5" height="1" fill="#fff" opacity="0.54"/><rect x="178.5" y="54.0" width="8.4" height="1" fill="#fff" opacity="0.50"/><rect x="140" y="49.0" width="64.2" height="1" fill="#fff" opacity="0.25"/><rect x="140" y="44.0" width="64.2" height="1" fill="#fff" opacity="0.20"/><rect x="164" y="68.2" width="40.2" height="1.5" fill="#fff" opacity="0.36"/><rect x="195" y="57.4" width="15.2" height="1" fill="#fff" opacity="0.54"/><rect x="211" y="54.1" width="14.9" height="1.5" fill="#fff" opacity="0.63"/><rect x="211" y="45.5" width="14.9" height="1" fill="#fff" opacity="0.36"/><rect x="195" y="63.0" width="5.2" height="1" fill="#fff" opacity="0.45"/><rect x="211" y="65.0" width="10.9" height="1.5" fill="#fff" opacity="0.63"/><rect x="226.7" y="60.0" width="18.5" height="1" fill="#fff" opacity="0.36"/><rect x="226.7" y="65.8" width="18.5" height="1.5" fill="#fff" opacity="0.41"/><rect x="263" y="62.8" width="8.2" height="1.5" fill="#fff" opacity="0.54"/><rect x="322" y="63.0" width="14.8" height="1.5" fill="#fff" opacity="0.54"/><rect x="322" y="56.0" width="15.2" height="1" fill="#fff" opacity="0.36"/><rect x="387" y="44.5" width="8.2" height="1" fill="#fff" opacity="0.45"/><rect x="387" y="62.0" width="8.2" height="1.5" fill="#fff" opacity="0.63"/><rect x="387" y="54.0" width="8.2" height="1" fill="#fff" opacity="0.36"/><rect x="246.5" y="69.4" width="38.7" height="2.2" fill="#fff" opacity="0.85"/><rect x="246.5" y="59.4" width="38.7" height="1.2" fill="#fff" opacity="0.56"/><rect x="246.5" y="63.1" width="38.7" height="1" fill="#fff" opacity="0.14"/><rect x="246.5" y="52.4" width="38.7" height="1.2" fill="#fff" opacity="0.50"/><rect x="246.5" y="56.1" width="38.7" height="1" fill="#fff" opacity="0.14"/><rect x="246.5" y="44.4" width="38.7" height="1.2" fill="#fff" opacity="0.41"/><rect x="246.5" y="48.1" width="38.7" height="1" fill="#fff" opacity="0.14"/><rect x="246.5" y="37.4" width="38.7" height="1.2" fill="#fff" opacity="0.32"/><rect x="246.5" y="41.1" width="38.7" height="1" fill="#fff" opacity="0.14"/><rect x="246.5" y="30.9" width="38.7" height="1.2" fill="#fff" opacity="0.20"/><rect x="287" y="69.4" width="17.2" height="2.2" fill="#fff" opacity="0.85"/><rect x="287" y="59.4" width="17.2" height="1.2" fill="#fff" opacity="0.56"/><rect x="287" y="63.1" width="17.2" height="1" fill="#fff" opacity="0.14"/><rect x="287" y="52.4" width="17.2" height="1.2" fill="#fff" opacity="0.50"/><rect x="287" y="56.1" width="17.2" height="1" fill="#fff" opacity="0.14"/><rect x="287" y="44.4" width="17.2" height="1.2" fill="#fff" opacity="0.41"/><rect x="287" y="48.1" width="17.2" height="1" fill="#fff" opacity="0.14"/><rect x="287" y="37.4" width="17.2" height="1.2" fill="#fff" opacity="0.32"/><rect x="287" y="41.1" width="17.2" height="1" fill="#fff" opacity="0.14"/><rect x="287" y="30.9" width="17.2" height="1.2" fill="#fff" opacity="0.20"/><rect x="306" y="69.4" width="15.2" height="2.2" fill="#fff" opacity="0.68"/><rect x="306" y="59.4" width="15.2" height="1.2" fill="#fff" opacity="0.45"/><rect x="306" y="63.1" width="15.2" height="1" fill="#fff" opacity="0.14"/><rect x="306" y="52.4" width="15.2" height="1.2" fill="#fff" opacity="0.40"/><rect x="306" y="56.1" width="15.2" height="1" fill="#fff" opacity="0.14"/><rect x="306" y="44.4" width="15.2" height="1.2" fill="#fff" opacity="0.33"/><rect x="306" y="48.1" width="15.2" height="1" fill="#fff" opacity="0.14"/><rect x="306" y="37.4" width="15.2" height="1.2" fill="#fff" opacity="0.26"/><rect x="306" y="41.1" width="15.2" height="1" fill="#fff" opacity="0.14"/><rect x="306" y="30.9" width="15.2" height="1.2" fill="#fff" opacity="0.16"/><rect x="340" y="69.4" width="15.6" height="2.2" fill="#fff" opacity="0.85"/><rect x="340" y="59.4" width="15.6" height="1.2" fill="#fff" opacity="0.56"/><rect x="340" y="63.1" width="15.6" height="1" fill="#fff" opacity="0.14"/><rect x="340" y="52.4" width="15.6" height="1.2" fill="#fff" opacity="0.50"/><rect x="340" y="56.1" width="15.6" height="1" fill="#fff" opacity="0.14"/><rect x="340" y="44.4" width="15.6" height="1.2" fill="#fff" opacity="0.41"/><rect x="340" y="48.1" width="15.6" height="1" fill="#fff" opacity="0.14"/><rect x="340" y="37.4" width="15.6" height="1.2" fill="#fff" opacity="0.32"/><rect x="340" y="41.1" width="15.6" height="1" fill="#fff" opacity="0.14"/><rect x="340" y="30.9" width="15.6" height="1.2" fill="#fff" opacity="0.20"/><rect x="357.4" y="69.4" width="26.8" height="2.2" fill="#fff" opacity="0.85"/><rect x="357.4" y="59.4" width="26.8" height="1.2" fill="#fff" opacity="0.56"/><rect x="357.4" y="63.1" width="26.8" height="1" fill="#fff" opacity="0.14"/><rect x="357.4" y="52.4" width="26.8" height="1.2" fill="#fff" opacity="0.50"/><rect x="357.4" y="56.1" width="26.8" height="1" fill="#fff" opacity="0.14"/><rect x="357.4" y="44.4" width="26.8" height="1.2" fill="#fff" opacity="0.41"/><rect x="357.4" y="48.1" width="26.8" height="1" fill="#fff" opacity="0.14"/><rect x="357.4" y="37.4" width="26.8" height="1.2" fill="#fff" opacity="0.32"/><rect x="357.4" y="41.1" width="26.8" height="1" fill="#fff" opacity="0.14"/><rect x="357.4" y="30.9" width="26.8" height="1.2" fill="#fff" opacity="0.20"/></g><g mask="url(#m1)"><rect width="396" height="98.0" filter="url(#nz)" opacity=".22"/></g><g mask="url(#m3)"><rect width="396" height="98.0" filter="url(#vd)" opacity=".5"/><rect width="396" height="98.0" filter="url(#vz)" opacity=".28"/></g></g><g transform="translate(0,98.0)"><rect width="396" height="98.0" fill="url(#sg)"/><g mask="url(#sm)"><g filter="url(#b2)"><rect x="5" y="0" width="8" height="74" fill="url(#sh)" opacity="0.80"/><rect x="17" y="0" width="8" height="74" fill="url(#sh)" opacity="0.68"/><rect x="28" y="0" width="8" height="74" fill="url(#sh)" opacity="0.73"/><rect x="40" y="0" width="8" height="74" fill="url(#sh)" opacity="0.77"/><rect x="51" y="0" width="8" height="74" fill="url(#sh)" opacity="0.67"/><rect x="63" y="0" width="8" height="74" fill="url(#sh)" opacity="0.85"/><rect x="74" y="0" width="9" height="74" fill="url(#sh)" opacity="0.68"/><rect x="86" y="0" width="7" height="74" fill="url(#sh)" opacity="0.88"/><rect x="97" y="0" width="8" height="74" fill="url(#sh)" opacity="0.69"/><rect x="109" y="0" width="9" height="74" fill="url(#sh)" opacity="0.87"/><rect x="120" y="0" width="8" height="74" fill="url(#sh)" opacity="0.82"/><rect x="132" y="0" width="7" height="74" fill="url(#sh)" opacity="0.68"/><rect x="144" y="0" width="8" height="74" fill="url(#sh)" opacity="0.83"/><rect x="155" y="0" width="8" height="74" fill="url(#sh)" opacity="0.58"/><rect x="167" y="0" width="9" height="74" fill="url(#sh)" opacity="0.65"/><rect x="178" y="0" width="7" height="74" fill="url(#sh)" opacity="0.64"/><rect x="190" y="0" width="8" height="74" fill="url(#sh)" opacity="0.84"/><rect x="201" y="0" width="9" height="74" fill="url(#sh)" opacity="0.86"/><rect x="213" y="0" width="7" height="74" fill="url(#sh)" opacity="0.68"/><rect x="224" y="0" width="7" height="74" fill="url(#sh)" opacity="0.59"/><rect x="236" y="0" width="8" height="74" fill="url(#sh)" opacity="0.57"/><rect x="246" y="0" width="7" height="74" fill="url(#sh)" opacity="0.90"/><rect x="259" y="0" width="7" height="74" fill="url(#sh)" opacity="0.86"/><rect x="271" y="0" width="7" height="74" fill="url(#sh)" opacity="0.80"/><rect x="287" y="0" width="8" height="74" fill="url(#sh)" opacity="0.94"/><rect x="294" y="0" width="9" height="74" fill="url(#sh)" opacity="0.63"/><rect x="305" y="0" width="9" height="74" fill="url(#sh)" opacity="0.81"/><rect x="317" y="0" width="8" height="74" fill="url(#sh)" opacity="0.66"/><rect x="328" y="0" width="8" height="74" fill="url(#sh)" opacity="0.69"/><rect x="340" y="0" width="8" height="74" fill="url(#sh)" opacity="0.97"/><rect x="357" y="0" width="8" height="74" fill="url(#sh)" opacity="0.88"/><rect x="363" y="0" width="9" height="74" fill="url(#sh)" opacity="0.80"/><rect x="375" y="0" width="7" height="74" fill="url(#sh)" opacity="0.84"/><rect x="386" y="0" width="9" height="74" fill="url(#sh)" opacity="0.73"/></g></g><rect x="51" y="29" width="11" height="43" fill="#000" opacity=".3" filter="url(#bs)"/><rect x="234" y="29" width="11" height="43" fill="#000" opacity=".3" filter="url(#bs)"/><rect x="275" y="29" width="11" height="43" fill="#000" opacity=".3" filter="url(#bs)"/><rect x="328" y="29" width="11" height="43" fill="#000" opacity=".3" filter="url(#bs)"/><rect x="345" y="29" width="11" height="43" fill="#000" opacity=".3" filter="url(#bs)"/><g filter="url(#b2)"><rect x="63" y="35" width="1.5" height="34" fill="#fff" opacity=".45"/><rect x="246" y="35" width="1.5" height="34" fill="#fff" opacity=".45"/><rect x="287" y="35" width="1.5" height="34" fill="#fff" opacity=".45"/><rect x="340" y="35" width="1.5" height="34" fill="#fff" opacity=".45"/><rect x="357" y="35" width="1.5" height="34" fill="#fff" opacity=".45"/><rect x="0" y="9.0" width="396" height="1" fill="#fff" opacity="0.040"/><rect x="0" y="12.5" width="396" height="1" fill="#fff" opacity="0.049"/><rect x="0" y="16.0" width="396" height="1" fill="#fff" opacity="0.058"/><rect x="0" y="19.5" width="396" height="1" fill="#fff" opacity="0.067"/><rect x="0" y="23.0" width="396" height="1" fill="#fff" opacity="0.076"/><rect x="0" y="26.5" width="396" height="1" fill="#fff" opacity="0.085"/><rect x="0" y="30.0" width="396" height="1" fill="#fff" opacity="0.094"/><rect x="0" y="33.5" width="396" height="1" fill="#fff" opacity="0.103"/><rect x="0" y="37.0" width="396" height="1" fill="#fff" opacity="0.112"/><rect x="0" y="40.5" width="396" height="1" fill="#fff" opacity="0.121"/><rect x="0" y="44.0" width="396" height="1" fill="#fff" opacity="0.130"/><rect x="0" y="47.5" width="396" height="1" fill="#fff" opacity="0.139"/><rect x="0" y="51.0" width="396" height="1" fill="#fff" opacity="0.148"/><rect x="0" y="54.5" width="396" height="1" fill="#fff" opacity="0.157"/></g><g filter="url(#bl)"><rect x="-4" y="80.8" width="19" height="10.1" fill="#fff" opacity="0.16"/><rect x="18" y="80.9" width="11" height="9.2" fill="#fff" opacity="0.14"/><rect x="30" y="81.0" width="15" height="9.8" fill="#fff" opacity="0.36"/><rect x="32" y="75.3" width="12" height="3" fill="#fff" opacity="0.30"/><rect x="49" y="81.8" width="14" height="8.1" fill="#fff" opacity="0.20"/><rect x="51" y="73.8" width="11" height="3" fill="#fff" opacity="0.19"/><rect x="64" y="82.8" width="15" height="9.3" fill="#fff" opacity="0.17"/><rect x="66" y="76.4" width="12" height="3" fill="#fff" opacity="0.26"/><rect x="80" y="80.5" width="10" height="10.1" fill="#fff" opacity="0.14"/><rect x="82" y="73.0" width="7" height="3" fill="#fff" opacity="0.18"/><rect x="93" y="84.0" width="15" height="9.5" fill="#fff" opacity="0.10"/><rect x="109" y="83.1" width="13" height="9.1" fill="#fff" opacity="0.07"/><rect x="111" y="76.2" width="10" height="3" fill="#fff" opacity="0.23"/><rect x="125" y="81.2" width="10" height="8.6" fill="#fff" opacity="0.26"/><rect x="127" y="72.6" width="7" height="3" fill="#fff" opacity="0.30"/><rect x="139" y="80.5" width="13" height="9.9" fill="#fff" opacity="0.27"/><rect x="154" y="81.2" width="13" height="8.8" fill="#fff" opacity="0.07"/><rect x="156" y="75.5" width="10" height="3" fill="#fff" opacity="0.16"/><rect x="172" y="81.7" width="19" height="7.9" fill="#fff" opacity="0.11"/><rect x="174" y="72.6" width="16" height="3" fill="#fff" opacity="0.25"/><rect x="196" y="81.3" width="12" height="9.2" fill="#fff" opacity="0.23"/><rect x="212" y="83.6" width="19" height="9.0" fill="#fff" opacity="0.22"/><rect x="233" y="83.6" width="12" height="9.9" fill="#fff" opacity="0.17"/><rect x="249" y="83.6" width="14" height="7.9" fill="#fff" opacity="0.39"/><rect x="266" y="80.7" width="15" height="10.3" fill="#fff" opacity="0.11"/><rect x="284" y="81.5" width="18" height="9.2" fill="#fff" opacity="0.13"/><rect x="286" y="74.3" width="15" height="3" fill="#fff" opacity="0.15"/><rect x="305" y="80.5" width="17" height="10.4" fill="#fff" opacity="0.16"/><rect x="307" y="73.2" width="14" height="3" fill="#fff" opacity="0.17"/><rect x="323" y="82.9" width="16" height="8.6" fill="#fff" opacity="0.15"/><rect x="340" y="80.9" width="13" height="9.6" fill="#fff" opacity="0.34"/><rect x="342" y="73.7" width="10" height="3" fill="#fff" opacity="0.23"/><rect x="354" y="83.7" width="18" height="8.3" fill="#fff" opacity="0.39"/><rect x="377" y="83.2" width="15" height="9.3" fill="#fff" opacity="0.32"/><rect x="379" y="74.9" width="12" height="3" fill="#fff" opacity="0.13"/></g><g mask="url(#m1)"><rect width="396" height="98.0" filter="url(#nz)" opacity=".5"/></g><g mask="url(#m2)"><rect width="396" height="98.0" filter="url(#nw)" opacity=".3"/></g><g filter="url(#b2)"><rect x="0" y="57.5" width="9.2" height="1" fill="#fff" opacity="0.57"/><rect x="10" y="61.0" width="16.2" height="1" fill="#fff" opacity="0.57"/><rect x="15" y="63.5" width="10.2" height="2" fill="#fff" opacity="0.66"/><rect x="0" y="68.5" width="26.2" height="2" fill="#fff" opacity="0.37"/><rect x="27" y="66.0" width="10.2" height="1" fill="#fff" opacity="0.45"/><rect x="0" y="52.0" width="26.2" height="1" fill="#fff" opacity="0.25"/><rect x="0" y="47.0" width="37.2" height="1" fill="#fff" opacity="0.20"/><rect x="63" y="54.8" width="26.2" height="1.5" fill="#fff" opacity="0.70"/><rect x="63" y="65.4" width="26.2" height="2.2" fill="#fff" opacity="0.82"/><rect x="63" y="50.0" width="26.2" height="1" fill="#fff" opacity="0.33"/><rect x="63" y="44.7" width="26.2" height="1" fill="#fff" opacity="0.33"/><rect x="63" y="40.6" width="26.2" height="1" fill="#fff" opacity="0.29"/><rect x="63" y="36.6" width="26.2" height="1" fill="#fff" opacity="0.25"/><rect x="63" y="60.5" width="26.2" height="1" fill="#fff" opacity="0.25"/><rect x="90" y="52.5" width="13.7" height="1.5" fill="#fff" opacity="0.66"/><rect x="104.5" y="55.5" width="11.4" height="1.5" fill="#fff" opacity="0.61"/><rect x="116.7" y="57.2" width="11.5" height="1.5" fill="#fff" opacity="0.57"/><rect x="97" y="65.3" width="6.7" height="1.5" fill="#fff" opacity="0.57"/><rect x="104.5" y="66.8" width="11.4" height="1.5" fill="#fff" opacity="0.61"/><rect x="116.7" y="68.2" width="9.5" height="1.5" fill="#fff" opacity="0.49"/><rect x="90" y="47.0" width="38.2" height="1" fill="#fff" opacity="0.25"/><rect x="90" y="42.0" width="38.2" height="1" fill="#fff" opacity="0.20"/><rect x="129" y="60.0" width="10.2" height="1" fill="#fff" opacity="0.33"/><rect x="129" y="66.0" width="10.2" height="1" fill="#fff" opacity="0.33"/><rect x="140" y="54.8" width="8.2" height="1" fill="#fff" opacity="0.49"/><rect x="141" y="60.8" width="11.2" height="1.5" fill="#fff" opacity="0.53"/><rect x="153" y="63.8" width="9.2" height="1.5" fill="#fff" opacity="0.49"/><rect x="164" y="61.8" width="13.7" height="1.5" fill="#fff" opacity="0.70"/><rect x="178.5" y="59.8" width="10.4" height="1.5" fill="#fff" opacity="0.57"/><rect x="189.7" y="63.8" width="14.5" height="1.5" fill="#fff" opacity="0.70"/><rect x="189.7" y="57.0" width="14.5" height="1" fill="#fff" opacity="0.49"/><rect x="178.5" y="54.0" width="8.4" height="1" fill="#fff" opacity="0.45"/><rect x="140" y="49.0" width="64.2" height="1" fill="#fff" opacity="0.23"/><rect x="140" y="44.0" width="64.2" height="1" fill="#fff" opacity="0.18"/><rect x="164" y="68.2" width="40.2" height="1.5" fill="#fff" opacity="0.33"/><rect x="195" y="57.4" width="15.2" height="1" fill="#fff" opacity="0.49"/><rect x="211" y="54.1" width="14.9" height="1.5" fill="#fff" opacity="0.57"/><rect x="211" y="45.5" width="14.9" height="1" fill="#fff" opacity="0.33"/><rect x="195" y="63.0" width="5.2" height="1" fill="#fff" opacity="0.41"/><rect x="211" y="65.0" width="10.9" height="1.5" fill="#fff" opacity="0.57"/><rect x="226.7" y="60.0" width="18.5" height="1" fill="#fff" opacity="0.33"/><rect x="226.7" y="65.8" width="18.5" height="1.5" fill="#fff" opacity="0.37"/><rect x="263" y="62.8" width="8.2" height="1.5" fill="#fff" opacity="0.49"/><rect x="322" y="63.0" width="14.8" height="1.5" fill="#fff" opacity="0.49"/><rect x="322" y="56.0" width="15.2" height="1" fill="#fff" opacity="0.33"/><rect x="387" y="44.5" width="8.2" height="1" fill="#fff" opacity="0.41"/><rect x="387" y="62.0" width="8.2" height="1.5" fill="#fff" opacity="0.57"/><rect x="387" y="54.0" width="8.2" height="1" fill="#fff" opacity="0.33"/><rect x="246.5" y="69.4" width="38.7" height="2.2" fill="#fff" opacity="0.78"/><rect x="246.5" y="59.4" width="38.7" height="1.2" fill="#fff" opacity="0.51"/><rect x="246.5" y="63.1" width="38.7" height="1" fill="#fff" opacity="0.13"/><rect x="246.5" y="52.4" width="38.7" height="1.2" fill="#fff" opacity="0.45"/><rect x="246.5" y="56.1" width="38.7" height="1" fill="#fff" opacity="0.13"/><rect x="246.5" y="44.4" width="38.7" height="1.2" fill="#fff" opacity="0.38"/><rect x="246.5" y="48.1" width="38.7" height="1" fill="#fff" opacity="0.13"/><rect x="246.5" y="37.4" width="38.7" height="1.2" fill="#fff" opacity="0.30"/><rect x="246.5" y="41.1" width="38.7" height="1" fill="#fff" opacity="0.13"/><rect x="246.5" y="30.9" width="38.7" height="1.2" fill="#fff" opacity="0.18"/><rect x="287" y="69.4" width="17.2" height="2.2" fill="#fff" opacity="0.78"/><rect x="287" y="59.4" width="17.2" height="1.2" fill="#fff" opacity="0.51"/><rect x="287" y="63.1" width="17.2" height="1" fill="#fff" opacity="0.13"/><rect x="287" y="52.4" width="17.2" height="1.2" fill="#fff" opacity="0.45"/><rect x="287" y="56.1" width="17.2" height="1" fill="#fff" opacity="0.13"/><rect x="287" y="44.4" width="17.2" height="1.2" fill="#fff" opacity="0.38"/><rect x="287" y="48.1" width="17.2" height="1" fill="#fff" opacity="0.13"/><rect x="287" y="37.4" width="17.2" height="1.2" fill="#fff" opacity="0.30"/><rect x="287" y="41.1" width="17.2" height="1" fill="#fff" opacity="0.13"/><rect x="287" y="30.9" width="17.2" height="1.2" fill="#fff" opacity="0.18"/><rect x="306" y="69.4" width="15.2" height="2.2" fill="#fff" opacity="0.62"/><rect x="306" y="59.4" width="15.2" height="1.2" fill="#fff" opacity="0.41"/><rect x="306" y="63.1" width="15.2" height="1" fill="#fff" opacity="0.13"/><rect x="306" y="52.4" width="15.2" height="1.2" fill="#fff" opacity="0.36"/><rect x="306" y="56.1" width="15.2" height="1" fill="#fff" opacity="0.13"/><rect x="306" y="44.4" width="15.2" height="1.2" fill="#fff" opacity="0.30"/><rect x="306" y="48.1" width="15.2" height="1" fill="#fff" opacity="0.13"/><rect x="306" y="37.4" width="15.2" height="1.2" fill="#fff" opacity="0.24"/><rect x="306" y="41.1" width="15.2" height="1" fill="#fff" opacity="0.13"/><rect x="306" y="30.9" width="15.2" height="1.2" fill="#fff" opacity="0.14"/><rect x="340" y="69.4" width="15.6" height="2.2" fill="#fff" opacity="0.78"/><rect x="340" y="59.4" width="15.6" height="1.2" fill="#fff" opacity="0.51"/><rect x="340" y="63.1" width="15.6" height="1" fill="#fff" opacity="0.13"/><rect x="340" y="52.4" width="15.6" height="1.2" fill="#fff" opacity="0.45"/><rect x="340" y="56.1" width="15.6" height="1" fill="#fff" opacity="0.13"/><rect x="340" y="44.4" width="15.6" height="1.2" fill="#fff" opacity="0.38"/><rect x="340" y="48.1" width="15.6" height="1" fill="#fff" opacity="0.13"/><rect x="340" y="37.4" width="15.6" height="1.2" fill="#fff" opacity="0.30"/><rect x="340" y="41.1" width="15.6" height="1" fill="#fff" opacity="0.13"/><rect x="340" y="30.9" width="15.6" height="1.2" fill="#fff" opacity="0.18"/><rect x="357.4" y="69.4" width="26.8" height="2.2" fill="#fff" opacity="0.78"/><rect x="357.4" y="59.4" width="26.8" height="1.2" fill="#fff" opacity="0.51"/><rect x="357.4" y="63.1" width="26.8" height="1" fill="#fff" opacity="0.13"/><rect x="357.4" y="52.4" width="26.8" height="1.2" fill="#fff" opacity="0.45"/><rect x="357.4" y="56.1" width="26.8" height="1" fill="#fff" opacity="0.13"/><rect x="357.4" y="44.4" width="26.8" height="1.2" fill="#fff" opacity="0.38"/><rect x="357.4" y="48.1" width="26.8" height="1" fill="#fff" opacity="0.13"/><rect x="357.4" y="37.4" width="26.8" height="1.2" fill="#fff" opacity="0.30"/><rect x="357.4" y="41.1" width="26.8" height="1" fill="#fff" opacity="0.13"/><rect x="357.4" y="30.9" width="26.8" height="1.2" fill="#fff" opacity="0.18"/></g><g mask="url(#m1)"><rect width="396" height="98.0" filter="url(#nz)" opacity=".22"/></g><g mask="url(#m3)"><rect width="396" height="98.0" filter="url(#vd)" opacity=".5"/><rect width="396" height="98.0" filter="url(#vz)" opacity=".28"/></g></g></svg>
<div class="a" style="left:1030px;top:300px;width:5px;height:291px;background:linear-gradient(#c0daaa 0,#b4c8a2 14px,#a9b0a4 40px,#a6a6a6 70px,#a6a6a6 100%)"></div>
<div class="win" style="left:544px;top:314px;width:488px;height:300px;background:linear-gradient(90deg,#eeecef 0,#e9e5ea 20%,#e0d8e1 50%,#e6e1e7 75%,#ebe8ec 100%)"></div>
<div class="ttl" style="left:552px;top:321px">Peak Meter</div>
<div class="cls" style="left:1008px;top:319px"></div><svg class="a" style="left:1013.4px;top:324.6px" width="9" height="9" viewBox="-0.6 -0.6 9.6 9.6"><path d="M0 0H2.2L3.8 1.8L5.4 0H7.6V1.1L5.3 3.6L7.6 6.1V7.2H5.4L3.8 5.4L2.2 7.2H0V6.1L2.3 3.6L0 1.1Z" fill="#fdfdfd" stroke="#403e49" stroke-width="1.3" stroke-linejoin="round"/></svg>
<div class="frm" style="left:550px;top:339px;width:476px;height:271px"></div>
<div class="a" style="left:571px;top:343px;width:358px;height:123px;background:linear-gradient(90deg,#000 0,rgb(0,96,198) 100%) 0 0/451px 100% no-repeat"></div>
<div class="a" style="left:571px;top:467px;width:353px;height:122px;background:linear-gradient(90deg,#000 0,rgb(0,96,198) 100%) 0 0/451px 100% no-repeat"></div>
<div class="a" style="left:940px;top:343px;width:1px;height:123px;background:#8a8a8a"></div>
<div class="a" style="left:927px;top:467px;width:1px;height:122px;background:#c8c8c8"></div>
<div class="a" style="left:981px;top:343px;width:1px;height:248px;background:#c4c4c4"></div>
<div class="t" style="left:558px;top:400px;font-size:8px;color:#111">FL</div>
<div class="t" style="left:558px;top:524px;font-size:8px;color:#111">FR</div>
<div class="t" style="left:958px;top:570px;font-size:12.5px;color:#000">hifi168.com</div>
<div class="win" style="left:567px;top:-1px;width:500px;height:296px;background:linear-gradient(90deg,#f0eaf0 0,#ecdfec 25%,#e6d6e6 50%,#eadcea 75%,#ecdeec 100%);border-color:#2c3034;box-shadow:0 2px 4px rgba(0,0,0,.45),0 6px 13px 2px rgba(0,0,0,.5)"></div>
<div class="ttl" style="left:575px;top:6px;color:#1a1a1a">Equalizer</div>
<div class="a" style="left:1031px;top:4px;width:10px;height:18px;border:1px solid #7a3a2a;border-radius:3px;background:linear-gradient(#e08868,#c84a28 50%,#b83818)"></div>
<div class="frm" style="left:573px;top:24px;width:480px;height:265px;background:#f0f0f0"></div>
<div class="a" style="left:588px;top:36px;width:4px;height:177px;border:1px solid #a6a6a6;border-right-color:#fcfcfc;border-bottom-color:#fcfcfc;background:#e6e6e6"></div>
<div class="a" style="left:579px;top:119px;width:21px;height:10px;border:1px solid #6c6c6c;border-radius:2px;background:linear-gradient(#f3f3f3,#e4e4e4 50%,#d2d2d2);box-shadow:inset 0 0 0 1px #fcfcfc"></div>
<div class="t" style="left:578px;top:223px;font-size:12px">55 Hz</div>
<div class="a" style="left:611px;top:36px;width:4px;height:177px;border:1px solid #a6a6a6;border-right-color:#fcfcfc;border-bottom-color:#fcfcfc;background:#e6e6e6"></div>
<div class="a" style="left:602px;top:119px;width:21px;height:10px;border:1px solid #6c6c6c;border-radius:2px;background:linear-gradient(#f3f3f3,#e4e4e4 50%,#d2d2d2);box-shadow:inset 0 0 0 1px #fcfcfc"></div>
<div class="t" style="left:601px;top:239px;font-size:12px">77 Hz</div>
<div class="a" style="left:635px;top:36px;width:4px;height:177px;border:1px solid #a6a6a6;border-right-color:#fcfcfc;border-bottom-color:#fcfcfc;background:#e6e6e6"></div>
<div class="a" style="left:626px;top:119px;width:21px;height:10px;border:1px solid #6c6c6c;border-radius:2px;background:linear-gradient(#f3f3f3,#e4e4e4 50%,#d2d2d2);box-shadow:inset 0 0 0 1px #fcfcfc"></div>
<div class="t" style="left:625px;top:223px;font-size:12px">110 Hz</div>
<div class="a" style="left:659px;top:36px;width:4px;height:177px;border:1px solid #a6a6a6;border-right-color:#fcfcfc;border-bottom-color:#fcfcfc;background:#e6e6e6"></div>
<div class="a" style="left:650px;top:119px;width:21px;height:10px;border:1px solid #6c6c6c;border-radius:2px;background:linear-gradient(#f3f3f3,#e4e4e4 50%,#d2d2d2);box-shadow:inset 0 0 0 1px #fcfcfc"></div>
<div class="t" style="left:649px;top:239px;font-size:12px">156 Hz</div>
<div class="a" style="left:683px;top:36px;width:4px;height:177px;border:1px solid #a6a6a6;border-right-color:#fcfcfc;border-bottom-color:#fcfcfc;background:#e6e6e6"></div>
<div class="a" style="left:674px;top:119px;width:21px;height:10px;border:1px solid #6c6c6c;border-radius:2px;background:linear-gradient(#f3f3f3,#e4e4e4 50%,#d2d2d2);box-shadow:inset 0 0 0 1px #fcfcfc"></div>
<div class="t" style="left:673px;top:223px;font-size:12px">220 Hz</div>
<div class="a" style="left:707px;top:36px;width:4px;height:177px;border:1px solid #a6a6a6;border-right-color:#fcfcfc;border-bottom-color:#fcfcfc;background:#e6e6e6"></div>
<div class="a" style="left:698px;top:119px;width:21px;height:10px;border:1px solid #6c6c6c;border-radius:2px;background:linear-gradient(#f3f3f3,#e4e4e4 50%,#d2d2d2);box-shadow:inset 0 0 0 1px #fcfcfc"></div>
<div class="t" style="left:697px;top:239px;font-size:12px">311 Hz</div>
<div class="a" style="left:731px;top:36px;width:4px;height:177px;border:1px solid #a6a6a6;border-right-color:#fcfcfc;border-bottom-color:#fcfcfc;background:#e6e6e6"></div>
<div class="a" style="left:722px;top:119px;width:21px;height:10px;border:1px solid #6c6c6c;border-radius:2px;background:linear-gradient(#f3f3f3,#e4e4e4 50%,#d2d2d2);box-shadow:inset 0 0 0 1px #fcfcfc"></div>
<div class="t" style="left:721px;top:223px;font-size:12px">440 Hz</div>
<div class="a" style="left:755px;top:36px;width:4px;height:177px;border:1px solid #a6a6a6;border-right-color:#fcfcfc;border-bottom-color:#fcfcfc;background:#e6e6e6"></div>
<div class="a" style="left:746px;top:119px;width:21px;height:10px;border:1px solid #6c6c6c;border-radius:2px;background:linear-gradient(#f3f3f3,#e4e4e4 50%,#d2d2d2);box-shadow:inset 0 0 0 1px #fcfcfc"></div>
<div class="t" style="left:745px;top:239px;font-size:12px">622 Hz</div>
<div class="a" style="left:779px;top:36px;width:4px;height:177px;border:1px solid #a6a6a6;border-right-color:#fcfcfc;border-bottom-color:#fcfcfc;background:#e6e6e6"></div>
<div class="a" style="left:770px;top:119px;width:21px;height:10px;border:1px solid #6c6c6c;border-radius:2px;background:linear-gradient(#f3f3f3,#e4e4e4 50%,#d2d2d2);box-shadow:inset 0 0 0 1px #fcfcfc"></div>
<div class="t" style="left:769px;top:223px;font-size:12px">880 Hz</div>
<div class="a" style="left:803px;top:36px;width:4px;height:177px;border:1px solid #a6a6a6;border-right-color:#fcfcfc;border-bottom-color:#fcfcfc;background:#e6e6e6"></div>
<div class="a" style="left:794px;top:119px;width:21px;height:10px;border:1px solid #6c6c6c;border-radius:2px;background:linear-gradient(#f3f3f3,#e4e4e4 50%,#d2d2d2);box-shadow:inset 0 0 0 1px #fcfcfc"></div>
<div class="t" style="left:793px;top:239px;font-size:12px">1.2 kHz</div>
<div class="a" style="left:827px;top:36px;width:4px;height:177px;border:1px solid #a6a6a6;border-right-color:#fcfcfc;border-bottom-color:#fcfcfc;background:#e6e6e6"></div>
<div class="a" style="left:818px;top:119px;width:21px;height:10px;border:1px solid #6c6c6c;border-radius:2px;background:linear-gradient(#f3f3f3,#e4e4e4 50%,#d2d2d2);box-shadow:inset 0 0 0 1px #fcfcfc"></div>
<div class="t" style="left:817px;top:223px;font-size:12px">1.8 kHz</div>
<div class="a" style="left:850px;top:36px;width:4px;height:177px;border:1px solid #a6a6a6;border-right-color:#fcfcfc;border-bottom-color:#fcfcfc;background:#e6e6e6"></div>
<div class="a" style="left:841px;top:119px;width:21px;height:10px;border:1px solid #6c6c6c;border-radius:2px;background:linear-gradient(#f3f3f3,#e4e4e4 50%,#d2d2d2);box-shadow:inset 0 0 0 1px #fcfcfc"></div>
<div class="t" style="left:840px;top:239px;font-size:12px">2.5 kHz</div>
<div class="a" style="left:874px;top:36px;width:4px;height:177px;border:1px solid #a6a6a6;border-right-color:#fcfcfc;border-bottom-color:#fcfcfc;background:#e6e6e6"></div>
<div class="a" style="left:865px;top:119px;width:21px;height:10px;border:1px solid #6c6c6c;border-radius:2px;background:linear-gradient(#f3f3f3,#e4e4e4 50%,#d2d2d2);box-shadow:inset 0 0 0 1px #fcfcfc"></div>
<div class="t" style="left:864px;top:223px;font-size:12px">3.5 kHz</div>
<div class="a" style="left:898px;top:36px;width:4px;height:177px;border:1px solid #a6a6a6;border-right-color:#fcfcfc;border-bottom-color:#fcfcfc;background:#e6e6e6"></div>
<div class="a" style="left:889px;top:119px;width:21px;height:10px;border:1px solid #6c6c6c;border-radius:2px;background:linear-gradient(#f3f3f3,#e4e4e4 50%,#d2d2d2);box-shadow:inset 0 0 0 1px #fcfcfc"></div>
<div class="t" style="left:888px;top:239px;font-size:12px">5 kHz</div>
<div class="a" style="left:922px;top:36px;width:4px;height:177px;border:1px solid #a6a6a6;border-right-color:#fcfcfc;border-bottom-color:#fcfcfc;background:#e6e6e6"></div>
<div class="a" style="left:913px;top:119px;width:21px;height:10px;border:1px solid #6c6c6c;border-radius:2px;background:linear-gradient(#f3f3f3,#e4e4e4 50%,#d2d2d2);box-shadow:inset 0 0 0 1px #fcfcfc"></div>
<div class="t" style="left:912px;top:223px;font-size:12px">7 kHz</div>
<div class="a" style="left:946px;top:36px;width:4px;height:177px;border:1px solid #a6a6a6;border-right-color:#fcfcfc;border-bottom-color:#fcfcfc;background:#e6e6e6"></div>
<div class="a" style="left:937px;top:119px;width:21px;height:10px;border:1px solid #6c6c6c;border-radius:2px;background:linear-gradient(#f3f3f3,#e4e4e4 50%,#d2d2d2);box-shadow:inset 0 0 0 1px #fcfcfc"></div>
<div class="t" style="left:936px;top:239px;font-size:12px">10 kHz</div>
<div class="a" style="left:970px;top:36px;width:4px;height:177px;border:1px solid #a6a6a6;border-right-color:#fcfcfc;border-bottom-color:#fcfcfc;background:#e6e6e6"></div>
<div class="a" style="left:961px;top:119px;width:21px;height:10px;border:1px solid #6c6c6c;border-radius:2px;background:linear-gradient(#f3f3f3,#e4e4e4 50%,#d2d2d2);box-shadow:inset 0 0 0 1px #fcfcfc"></div>
<div class="t" style="left:960px;top:223px;font-size:12px">14 kHz</div>
<div class="a" style="left:994px;top:36px;width:4px;height:177px;border:1px solid #a6a6a6;border-right-color:#fcfcfc;border-bottom-color:#fcfcfc;background:#e6e6e6"></div>
<div class="a" style="left:985px;top:119px;width:21px;height:10px;border:1px solid #6c6c6c;border-radius:2px;background:linear-gradient(#f3f3f3,#e4e4e4 50%,#d2d2d2);box-shadow:inset 0 0 0 1px #fcfcfc"></div>
<div class="t" style="left:984px;top:239px;font-size:12px">20 kHz</div>
<div class="t" style="left:1008px;top:30px;font-size:12px">+20dB</div>
<div class="t" style="left:1008px;top:118px;font-size:12px">+0dB</div>
<div class="t" style="left:1008px;top:207px;font-size:12px">-20dB</div>
<div class="a" style="left:585px;top:262px;width:13px;height:13px;border:1px solid #8e8f8f;background:linear-gradient(135deg,#d4d4d4,#f6f6f6 70%);box-shadow:inset 0 0 0 1px #f4f4f4,inset 0 0 0 2px #c2c2c2"></div>
<div class="t" style="left:601.5px;top:263px;font-size:12px;letter-spacing:.25px">Equalizer Enabled</div>
<div class="btn" style="left:720px;top:258px;width:49px">Zero All</div>
<div class="btn" style="left:779px;top:258px;width:65px">Auto Level</div>
<div class="btn" style="left:854px;top:258px;width:72px">Load Preset</div>
<div class="btn" style="left:936px;top:258px;width:70px">Save Preset</div>
<div class="a" style="left:776px;top:295px;width:18px;height:19px;background:linear-gradient(#a4a4a4 0,#cfcfcf 25%,#e2e2e2 60%,#e6e6e6 100%);border-left:1px solid #c4c4c4"></div>
<div class="a" style="left:794px;top:295px;width:12px;height:19px;background:linear-gradient(90deg,#f4f4f4 0,#f4f4f4 1px,#5c5c5c 1px,#5c5c5c 2px,#f6f6f6 2px,#ececec 4px,#4c4c4c 4px,#4c4c4c 5px,#dccfe0 5px,#d6c8da 11px,#1c1c1c 11px,#1c1c1c 12px)"></div>
<div class="a" style="left:794px;top:295px;width:12px;height:5px;background:linear-gradient(rgba(0,0,0,.35),rgba(0,0,0,0))"></div>
<div class="a" style="left:806px;top:295px;width:229px;height:19px;background:linear-gradient(#75895f 0,#9db588 12%,#b6cfa0 28%,#c1dbab 50%,#c0daaa 72%,#9fb68d 100%)"></div>
<div class="a" style="left:806px;top:295px;width:6px;height:19px;background:linear-gradient(90deg,rgba(60,80,50,.45),rgba(60,80,50,0))"></div>
<svg class="a" style="left:806px;top:292px" width="36" height="10"><g stroke="#111" stroke-width="1.1" fill="none"><path d="M1 1h8v8h-8zM1 4h8M1 6.5h8M12 2h4v6h-4zM18 1h6v8M18 4h6M21 1v8M26 2v6M28 1h4v8"/></g><path d="M33 8.5h5.5v-5.5z" fill="#111"/></svg>
<div class="a" style="left:568px;top:289px;width:470px;height:2px;background:#f6f3f7"></div>
<div class="a" style="left:568px;top:291px;width:470px;height:3px;background:linear-gradient(#d4e6f3,#b4d6ec 50%,#9fcbe6)"></div>
</body></html>
